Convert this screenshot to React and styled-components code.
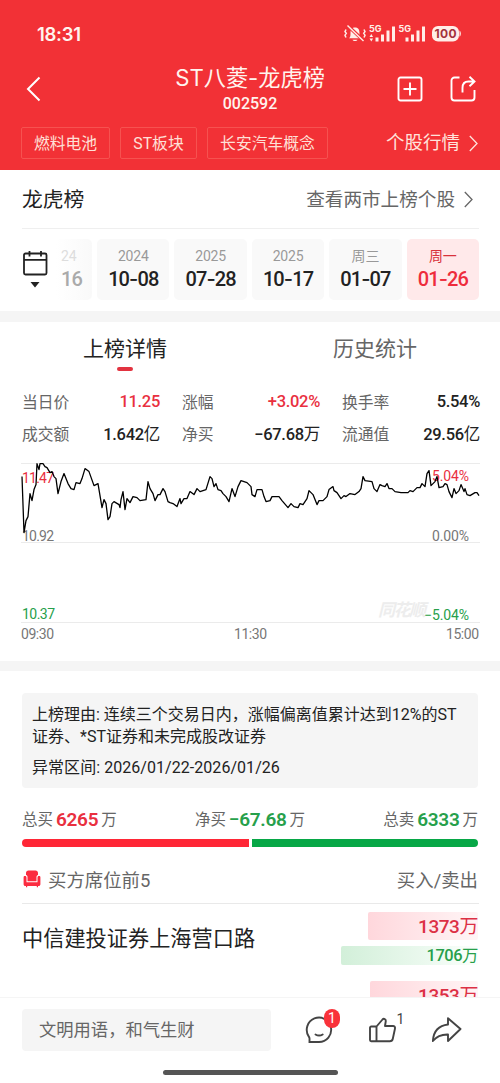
import React, { useState } from 'react';
import styled, { createGlobalStyle } from 'styled-components';

const GlobalStyle = createGlobalStyle`
  * {
    box-sizing: border-box;
  }
  body {
    margin: 0;
    background: #fff;
    font-family: Roboto, 'Noto Sans CJK SC', sans-serif;
    color: #222;
  }
`;

const Page = styled.div`
  width: 500px;
  height: 1083px;
  display: flex;
  flex-direction: column;
  overflow: hidden;
  background: #fff;
  white-space: nowrap;
`;

const Header = styled.header`
  height: 170px;
  flex: none;
  background: #f23136;
  color: #fff4ee;
`;

const StatusBar = styled.div`
  height: 58px;
  padding: 9px 38px 0 37px;
  display: flex;
  justify-content: space-between;
  align-items: center;
`;

const Clock = styled.span`
  font-family: Inter, sans-serif;
  font-size: 18.5px;
  font-weight: 600;
  letter-spacing: -0.3px;
`;

const TitleBar = styled.div`
  height: 58px;
  padding: 3px 24px 0 26px;
  display: grid;
  grid-template-columns: 79px 1fr 79px;
  align-items: center;
`;

const TitleBlock = styled.div`
  text-align: center;
  margin: 0 1px 0 -1px;
`;

const Title = styled.h1`
  margin: 0;
  font-family: Inter, 'Noto Sans CJK SC', sans-serif;
  font-size: 22.2px;
  line-height: 30px;
  font-weight: 400;
`;

const Code = styled.div`
  font-size: 16px;
  line-height: 22px;
  font-weight: 500;
`;

const Actions = styled.div`
  display: flex;
  justify-content: flex-end;
  gap: 27px;
`;

const TagBar = styled.div`
  height: 32px;
  margin-top: 11px;
  padding: 0 22px 0 21px;
  display: flex;
  align-items: center;
`;

const Tag = styled.span`
  width: ${(p) => p.$width}px;
  height: 32px;
  margin-right: 10px;
  border: 1px solid #f65250;
  border-radius: 2px;
  font-size: 15.8px;
  line-height: 31px;
  text-align: center;
  color: #ffe0d8;
`;

const QuoteLink = styled.span`
  margin-left: auto;
  display: flex;
  align-items: center;
  gap: 9px;
  font-size: 18.5px;
  line-height: 30px;
  color: #ffe3dc;
`;

const SectionHead = styled.div`
  height: 59px;
  margin: 0 21px 0 22px;
  padding-right: 6px;
  display: flex;
  justify-content: space-between;
  align-items: center;
  border-bottom: 1px solid #efefef;
`;

const SectionTitle = styled.h2`
  margin: 2px 0 0;
  font-size: 20.8px;
  font-weight: 400;
  line-height: 30px;
`;

const MoreLink = styled.span`
  margin-top: 1px;
  display: flex;
  align-items: center;
  gap: 9px;
  font-size: 18.6px;
  line-height: 30px;
  color: #666;
`;

const DateStrip = styled.div`
  height: 82px;
  padding: 10px 21px 0 22px;
  display: flex;
`;

const CalendarButton = styled.div`
  width: 34px;
  padding-top: 11px;
`;

const DateList = styled.div`
  flex: 1;
  display: flex;
  justify-content: flex-end;
  gap: 5px;
  overflow: hidden;
`;

const DateTile = styled.div`
  width: 72.4px;
  height: 61px;
  flex: none;
  padding-top: 7px;
  border-radius: 5px;
  text-align: center;
  background: ${(p) => (p.$active ? '#ffe9ea' : '#f9f9f9')};
  color: ${(p) => (p.$active ? '#ee2c3c' : '#222')};
`;

const FadedTile = styled(DateTile)`
  width: 36px;
  padding-left: 5px;
  text-align: left;
  color: #aaa;
  background: linear-gradient(90deg, #fff, #f9f9f9);
`;

const TileYear = styled.div`
  font-size: 14px;
  line-height: 20px;
  letter-spacing: -0.2px;
  color: ${(p) => (p.$active ? '#d8323c' : p.$faded ? '#ddd' : '#999')};
`;

const TileDay = styled.div`
  font-size: 20px;
  line-height: 27px;
  font-weight: 500;
  letter-spacing: -0.9px;
`;

const Dash = styled.span`
  font-family: Inter, sans-serif;
`;

const Band = styled.div`
  height: ${(p) => p.$height}px;
  flex: none;
  background: #f5f5f5;
`;

const Tabs = styled.div`
  height: 64px;
  flex: none;
  display: grid;
  grid-template-columns: 1fr 1fr;
`;

const Tab = styled.button`
  border: 0;
  background: none;
  padding: 12px 0 0;
  display: flex;
  flex-direction: column;
  align-items: center;
  font-family: inherit;
  font-size: 21px;
  line-height: 30px;
  font-weight: 400;
  color: ${(p) => (p.$active ? '#222' : '#666')};

  &::after {
    content: '';
    width: 16px;
    height: 4px;
    margin-top: 3px;
    border-radius: 2px;
    background: ${(p) => (p.$active ? '#e23340' : 'transparent')};
  }
`;

const Stats = styled.div`
  height: 64px;
  flex: none;
  padding: 0 20px 0 22px;
  display: grid;
  grid-template-columns: repeat(3, 138px);
  column-gap: 22px;
  grid-auto-rows: 31.5px;
`;

const Stat = styled.div`
  display: flex;
  justify-content: space-between;
  align-items: center;
  font-size: 15.8px;
  color: #666;
`;

const StatValue = styled.span`
  font-size: 16.5px;
  font-weight: 500;
  letter-spacing: -0.3px;
  color: ${(p) => (p.$up ? '#e9303f' : '#222')};
`;

const Unit = styled.span`
  font-weight: 400;
`;

const ChartBox = styled.div`
  height: 211px;
  flex: none;
  margin-left: 21px;

  svg {
    display: block;
  }
`;

const Notice = styled.div`
  flex: none;
  height: 95px;
  margin: 22px 22px 0;
  padding: 11px 10px 0;
  border-radius: 4px;
  background: #f5f5f5;
  font-size: 16px;
  line-height: 21.5px;
  color: #222;
`;

const Period = styled.div`
  margin-top: 10px;
  letter-spacing: 0.05px;
`;

const Totals = styled.div`
  height: 51px;
  flex: none;
  padding: 12px 22px 0 22px;
  display: flex;
  justify-content: space-between;
  align-items: center;
`;

const Total = styled.div`
  display: flex;
  align-items: center;
  gap: 3px;
  font-size: 15.5px;
  line-height: 24px;
  color: #666;
`;

const TotalValue = styled.span`
  font-size: 19px;
  font-weight: 600;
  letter-spacing: -0.3px;
  color: ${(p) => (p.$up ? '#e9303f' : '#27a04b')};
`;

const RatioBar = styled.div`
  height: 8px;
  flex: none;
  margin: 0 22px;
  display: flex;
  gap: 3px;
  border-radius: 4px;
  overflow: hidden;
`;

const RatioPart = styled.div`
  flex: 1;
  background: ${(p) => (p.$up ? '#ff2736' : '#07a746')};
`;

const SeatHead = styled.div`
  height: 57px;
  flex: none;
  margin: 0 21px 0 22px;
  padding: 8px 1px 0 1px;
  display: flex;
  justify-content: space-between;
  align-items: center;
  border-bottom: 1px solid #e9e9e9;
  font-size: 18.4px;
  color: #666;
`;

const SeatLabel = styled.span`
  display: flex;
  align-items: center;
  gap: 7px;
`;

const SeatList = styled.div`
  flex: 1;
  min-height: 0;
  overflow: hidden;
  padding: 8px 22px 0;
`;

const SeatRow = styled.div`
  height: 69px;
  display: flex;
  justify-content: space-between;
`;

const SeatName = styled.span`
  margin-top: 12px;
  font-size: 21.2px;
  line-height: 30px;
`;

const Amounts = styled.div`
  display: flex;
  flex-direction: column;
  align-items: flex-end;
  gap: 6px;
`;

const BuyBar = styled.div`
  width: ${(p) => p.$width}px;
  height: 28px;
  border-radius: 2px;
  background: linear-gradient(90deg, #ffd7dc, #fff5f6);
  color: #dc3045;
  font-size: 19px;
  line-height: 30px;
  font-weight: 500;
  letter-spacing: -0.45px;
  text-align: right;
`;

const SellBar = styled(BuyBar)`
  height: 19px;
  background: linear-gradient(90deg, #d2efd9, #fbfffc);
  color: #279f4b;
  font-size: 16.4px;
  line-height: 19px;
`;

const Footer = styled.footer`
  height: 86px;
  flex: none;
  border-top: 1px solid #f5f5f5;
  padding: 11px 0 0 22px;
  background: #fff;
`;

const FooterRow = styled.div`
  display: flex;
  align-items: center;
`;

const CommentBox = styled.div`
  width: 249px;
  flex: none;
  height: 42px;
  padding-left: 17px;
  margin-right: 34px;
  border-radius: 4px;
  background: #f5f5f5;
  font-size: 17.3px;
  line-height: 43px;
  color: #666;
`;

const FooterAction = styled.div`
  position: relative;
  flex: none;
  width: 63.5px;
  height: 28px;
`;

const Badge = styled.span`
  position: absolute;
  left: 19px;
  top: -7px;
  width: 16px;
  height: 19px;
  border-radius: 8px;
  background: #f9323a;
  color: #fff;
  font-size: 14px;
  line-height: 19px;
  text-align: center;
`;

const LikeCount = styled.span`
  position: absolute;
  left: 28px;
  top: -6px;
  font-size: 14px;
  line-height: 18px;
  color: #444;
`;

const HomeBar = styled.div`
  width: 175px;
  height: 5px;
  margin: 19px 0 0 141px;
  border-radius: 3px;
  background: #555;
`;

const dates = [
  { year: '2024', day: '10-08' },
  { year: '2025', day: '07-28' },
  { year: '2025', day: '10-17' },
  { year: '周三', day: '01-07' },
  { year: '周一', day: '01-26' },
];

const stats = [
  { label: '当日价', value: '11.25', up: true },
  { label: '涨幅', value: '+3.02%', up: true },
  { label: '换手率', value: '5.54%' },
  { label: '成交额', value: '1.642', unit: '亿' },
  { label: '净买', value: '−67.68', unit: '万' },
  { label: '流通值', value: '29.56', unit: '亿' },
];

const pricePoints =
  '1,26 3,82 5,70 7,66 9,43 11,50 13,39 15,34 16,13 18,19 19,13 22,13 24,16 26,17 29,22 31,21 33,26 35,28 37,43 40,31 43,23 47,33 50,38 53,39 55,32 59,33 61,28 64,18 68,21 73,35 77,33 81,57 83,49 85,53 87,69 89,66 91,53 93,51 98,54 99,57 100,49 102,41 104,59 106,48 109,52 112,46 116,47 119,50 125,49 127,31 129,38 132,43 134,50 137,44 139,44 142,38 144,41 147,51 149,52 152,53 156,56 159,48 160,53 163,48 166,48 169,41 173,44 176,38 179,41 185,39 189,26 191,28 193,36 195,33 197,39 200,40 202,43 205,46 208,51 211,38 214,46 217,36 220,30 226,32 230,36 231,44 234,46 236,39 241,39 243,46 245,51 249,50 251,46 258,46 261,50 267,57 270,53 273,56 277,57 279,53 282,54 286,48 288,40 292,44 296,54 298,50 302,50 306,46 308,39 312,36 313,40 316,42 320,48 323,45 325,46 329,43 334,44 338,41 340,38 342,26 344,30 351,31 353,38 356,41 359,34 361,35 364,36 366,33 368,38 371,38 374,41 380,42 387,42 389,40 392,41 396,37 399,37 401,33 404,36 406,23 408,20 410,35 414,31 416,26 418,37 422,36 424,33 426,34 428,41 431,47 433,38 435,43 438,40 440,34 443,41 444,38 446,44 449,45 454,42 456,42 458,45';

const Chevron = () => (
  <svg width="9" height="17" viewBox="0 0 9 17" fill="none" stroke="currentColor" strokeWidth="1.3">
    <path d="M.8 1 8 8.5.8 16" />
  </svg>
);

const StatusIcons = () => (
  <svg width="118" height="22" viewBox="0 0 118 22" fill="#ffeee8">
    <path d="M5 15.200c1.400-1 1.500-2.500 1.500-5C6.500 6 8.200 4.400 11 4.400s4.500 1.600 4.500 5.800c0 2.500.1 4 1.500 5zM8.500 16.700h5c-.5 1.800-4.500 1.800-5 0z" />
    <path d="M2 6.500l-1 2.200 1.300 1.500-1.300 2 1 2.300M20 6.500l1 2.200-1.300 1.500 1.300 2-1 2.300" stroke="#ffeee8" strokeWidth="1.500" fill="none" />
    <path d="M3 2 20 18" stroke="#f23136" strokeWidth="3.500" />
    <path d="M3.500 2.500 19.500 18" stroke="#ffeee8" strokeWidth="1.400" />
    <text x="25" y="9" fontSize="9" fontWeight="700" fontFamily="Inter, sans-serif" textLength="12.500">5G</text>
    <path d="M25.500 14l1.800-3 1.800 3zM25.500 15.500h3.600l-1.800 3zM31.500 14.500h3v4h-3zM37 11.500h3v7h-3zM42.500 7.500h3v11h-3zM48 3.500h3v15h-3z" />
    <text x="54.500" y="9" fontSize="9" fontWeight="700" fontFamily="Inter, sans-serif" textLength="12.500">5G</text>
    <path d="M61.500 14.500h3v4h-3zM67 11.500h3v7h-3zM72.500 7.500h3v11h-3zM78 3.500h3v15h-3z" />
    <rect x="88" y="3" width="27" height="15.500" rx="6" />
    <path d="M115.500 7.500c1.800 1 1.800 5.200 0 6.200z" />
    <text x="90.500" y="15" fontSize="12" fontWeight="700" fontFamily="Inter, sans-serif" fill="#a3323c" textLength="22">100</text>
  </svg>
);

const CalendarIcon = () => (
  <svg width="26" height="40" viewBox="0 0 26 40" fill="none" stroke="#222" strokeWidth="1.800">
    <rect x="2" y="3.500" width="22.500" height="21" rx="1.500" />
    <path d="M2 9.800h22.500M7.500 1v5.500M19 1v5.500" />
    <path d="M8.500 32h9L13 37.500z" fill="#222" stroke="none" />
  </svg>
);

const SofaIcon = () => (
  <svg width="18" height="18" viewBox="0 0 18 18" fill="#fb2c40">
    <path d="M3 5V3C3 1.500 4 .5 5.500.5h7C14 .5 15 1.500 15 3v2c-1 .4-1.500 1-1.500 2v4.300h-9V7c0-1-.5-1.600-1.500-2z" />
    <path d="M1.300 6c1.400-.4 2.200.3 2.200 1.500v4.800h11V7.500c0-1.200.8-1.900 2.200-1.500.5.200.7.600.7 1.200v7.100c0 1-.8 1.800-1.800 1.800H2.400c-1 0-1.800-.8-1.800-1.800V7.200c0-.6.200-1 .7-1.200zM3 16.100h1.200v1.200H3zM13.800 16.100H15v1.200h-1.200z" />
  </svg>
);

const PriceChart = () => (
  <ChartBox>
    <svg width="460" height="200" viewBox="0 0 460 200" fontFamily="Roboto, sans-serif" fontSize="14">
      <path d="M0 13.500h459M0 92.500h459M0 172.500h459" stroke="#ebebeb" />
      <text x="357" y="166" fontSize="17" fontWeight="700" fontStyle="italic" fontFamily="Noto Sans CJK SC, sans-serif" fill="#ededed" textLength="48">同花顺</text>
      <text x="1" y="33" fill="#e9303f" textLength="32">11.47</text>
      <text x="1" y="91" fill="#777" textLength="32">10.92</text>
      <text x="1" y="169" fill="#27a04b" textLength="33">10.37</text>
      <text x="411" y="31" fill="#e9303f" textLength="37">5.04%</text>
      <text x="411" y="91" fill="#777" textLength="37">0.00%</text>
      <text x="403" y="170" fill="#27a04b" textLength="45">−5.04%</text>
      <polyline points={pricePoints} transform="translate(0 .6)" fill="none" stroke="#000" strokeWidth="1.3" strokeLinejoin="round" />
      <g fill="#777">
        <text x="0" y="189" textLength="33">09:30</text>
        <text x="213" y="189" textLength="33">11:30</text>
        <text x="425" y="189" textLength="33">15:00</text>
      </g>
    </svg>
  </ChartBox>
);

const App = () => {
  const [tab, setTab] = useState(0);
  const [selected, setSelected] = useState(4);

  return (
    <Page>
      <GlobalStyle />
      <Header>
        <StatusBar>
          <Clock>18:31</Clock>
          <StatusIcons />
        </StatusBar>
        <TitleBar>
          <svg width="16" height="26" viewBox="0 0 16 26" fill="none" stroke="#fff" strokeWidth="2">
            <path d="M13.500 1.500 2 13l11.500 11.500" />
          </svg>
          <TitleBlock>
            <Title>ST八菱-龙虎榜</Title>
            <Code>002592</Code>
          </TitleBlock>
          <Actions>
            <svg width="26" height="26" viewBox="0 0 26 26" fill="none" stroke="#fff" strokeWidth="1.900">
              <rect x="1.500" y="1.500" width="23" height="23" rx="2" />
              <path d="M6.500 13h13M13 6.500v13" />
            </svg>
            <svg width="26" height="26" viewBox="0 0 26 26" fill="none" stroke="#fff" strokeWidth="1.900">
              <path d="M9.500 1.500h-5a3 3 0 0 0-3 3v17a3 3 0 0 0 3 3h17a3 3 0 0 0 3-3V14M12.500 16.500V12c0-4 2-6.500 6-6.500h6M19.500.8l5 4.700-5 4.700" />
            </svg>
          </Actions>
        </TitleBar>
        <TagBar>
          <Tag $width={89}>燃料电池</Tag>
          <Tag $width={77}>ST板块</Tag>
          <Tag $width={121}>长安汽车概念</Tag>
          <QuoteLink>个股行情<Chevron /></QuoteLink>
        </TagBar>
      </Header>

      <SectionHead>
        <SectionTitle>龙虎榜</SectionTitle>
        <MoreLink>查看两市上榜个股<Chevron /></MoreLink>
      </SectionHead>
      <DateStrip>
        <CalendarButton>
          <CalendarIcon />
        </CalendarButton>
        <DateList>
          <FadedTile>
            <TileYear $faded>24</TileYear>
            <TileDay>16</TileDay>
          </FadedTile>
          {dates.map((item, index) => {
            const [month, day] = item.day.split('-');
            return (
              <DateTile key={item.day} $active={index === selected} onClick={() => setSelected(index)}>
                <TileYear $active={index === selected}>{item.year}</TileYear>
                <TileDay>{month}<Dash>-</Dash>{day}</TileDay>
              </DateTile>
            );
          })}
        </DateList>
      </DateStrip>
      <Band $height={11} />

      <Tabs>
        {['上榜详情', '历史统计'].map((name, index) => (
          <Tab key={name} $active={index === tab} onClick={() => setTab(index)}>{name}</Tab>
        ))}
      </Tabs>
      <Stats>
        {stats.map((item) => (
          <Stat key={item.label}>
            {item.label}
            <StatValue $up={item.up}>{item.value}{item.unit && <Unit>{item.unit}</Unit>}</StatValue>
          </Stat>
        ))}
      </Stats>
      <PriceChart />
      <Band $height={10} />

      <Notice>
        <div>上榜理由: 连续三个交易日内，涨幅偏离值累计达到12%的ST<br />证券、*ST证券和未完成股改证券</div>
        <Period>异常区间: 2026/01/22-2026/01/26</Period>
      </Notice>
      <Totals>
        <Total>总买<TotalValue $up>6265</TotalValue>万</Total>
        <Total>净买<TotalValue>−67.68</TotalValue>万</Total>
        <Total>总卖<TotalValue>6333</TotalValue>万</Total>
      </Totals>
      <RatioBar>
        <RatioPart $up />
        <RatioPart />
      </RatioBar>
      <SeatHead>
        <SeatLabel><SofaIcon />买方席位前5</SeatLabel>
        <span>买入/卖出</span>
      </SeatHead>
      <SeatList>
        <SeatRow>
          <SeatName>中信建投证券上海营口路</SeatName>
          <Amounts>
            <BuyBar $width={110}>1373<Unit>万</Unit></BuyBar>
            <SellBar $width={137}>1706<Unit>万</Unit></SellBar>
          </Amounts>
        </SeatRow>
        <SeatRow>
          <SeatName />
          <Amounts>
            <BuyBar $width={108}>1353<Unit>万</Unit></BuyBar>
          </Amounts>
        </SeatRow>
      </SeatList>

      <Footer>
        <FooterRow>
          <CommentBox>文明用语，和气生财</CommentBox>
          <FooterAction>
            <svg width="28" height="28" viewBox="0 0 28 28" fill="none" stroke="#444" strokeWidth="1.900">
              <path d="M4.500 26H14a12.200 12.200 0 1 0-10.300-5.600c.9 1.300 1 2.200.8 3.300z" />
              <path d="M10.500 18.500c2.200 1.300 5 1.300 7.200 0" strokeLinecap="round" />
            </svg>
            <Badge>1</Badge>
          </FooterAction>
          <FooterAction>
            <svg width="28" height="28" viewBox="0 0 28 28" fill="none" stroke="#444" strokeWidth="1.900" strokeLinejoin="round">
              <path d="M7.500 10.500H2.200c-.7 0-1.200.5-1.200 1.200V24c0 .7.500 1.200 1.200 1.200h18.600c1.600 0 2.700-1 3-2.500l2.200-10.200c.3-1.500-.6-2.500-2-2.500H16l.8-5c.3-1.800-2-2.900-3.300-1.500l-6 7zV25" />
            </svg>
            <LikeCount>1</LikeCount>
          </FooterAction>
          <FooterAction>
            <svg width="30" height="28" viewBox="0 0 30 28" fill="none" stroke="#444" strokeWidth="1.900" strokeLinejoin="round">
              <path d="M16 2.200v6.300C7.500 9.500 1.500 15 .9 25c4-5 8.600-6.700 15.100-6.500v6.500l12.500-12z" />
            </svg>
          </FooterAction>
        </FooterRow>
        <HomeBar />
      </Footer>
    </Page>
  );
};

export default App;
